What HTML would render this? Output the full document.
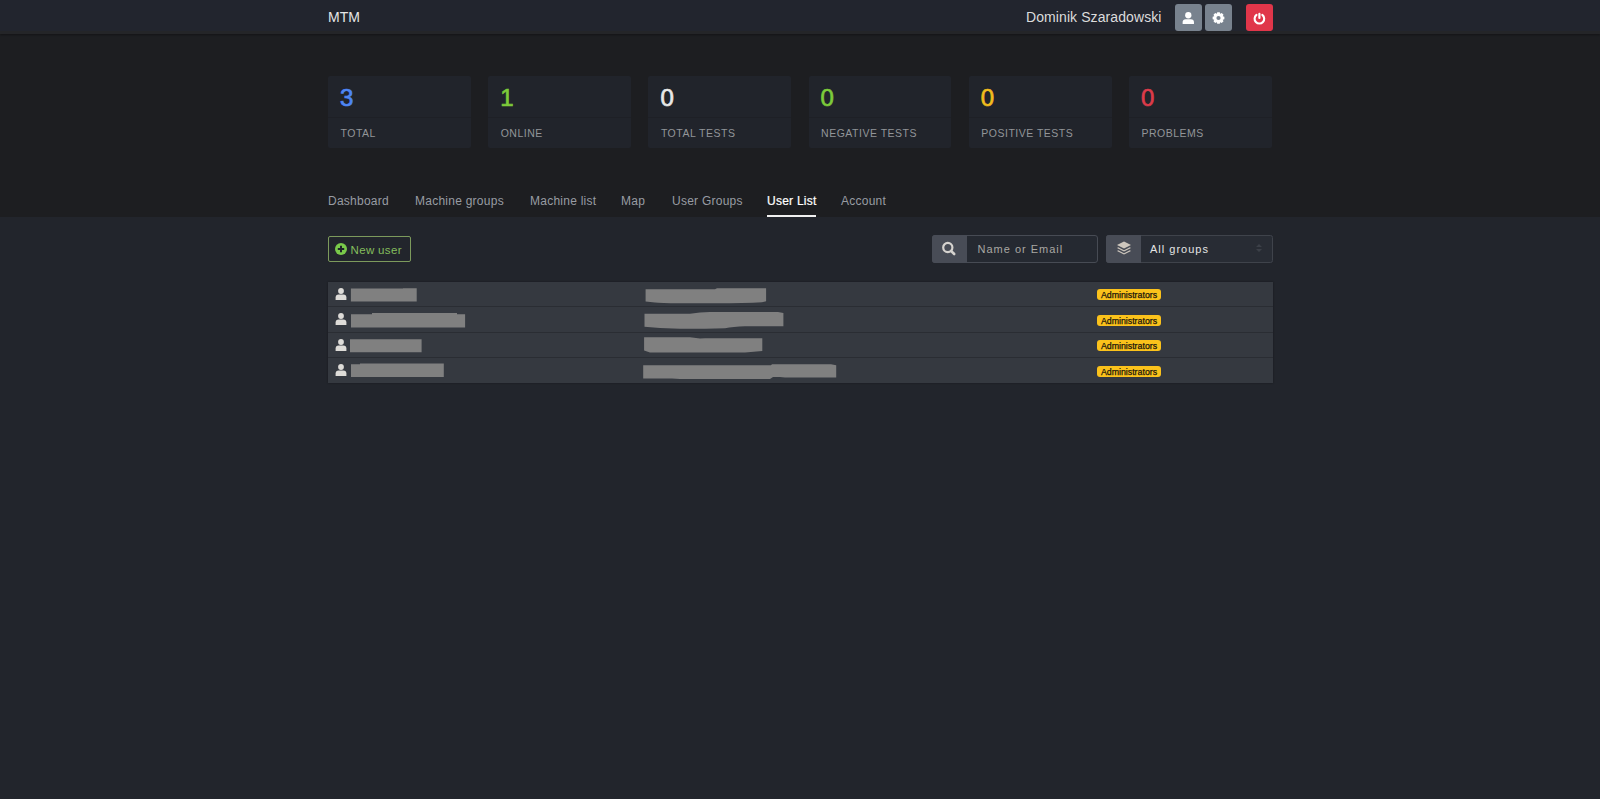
<!DOCTYPE html>
<html><head><meta charset="utf-8">
<style>
html,body{margin:0;padding:0;}
body{width:1600px;height:799px;overflow:hidden;position:relative;background:#22252c;font-family:"Liberation Sans",sans-serif;}
.abs{position:absolute;}
#hdr{left:0;top:0;width:1600px;height:31px;background:#22252e;border-bottom:3px solid #242528;box-shadow:0 1px 2px rgba(0,0,0,.35);z-index:3;}
#top{left:0;top:34px;width:1600px;height:183px;background:#1d1e21;z-index:1;}
.t{position:absolute;white-space:nowrap;line-height:1;}
.hbtn{position:absolute;top:4px;width:26.5px;height:27px;border-radius:3px;background:#78828e;}
.card{position:absolute;top:76.2px;width:142.8px;height:71.6px;background:#21242b;border-radius:2px;z-index:2;}
.card .hd{position:absolute;left:0;top:0;right:0;height:41.3px;border-bottom:1px solid #1e2026;}
.num{position:absolute;left:12px;top:10px;font-size:24px;line-height:1;-webkit-text-stroke:0.7px currentColor;}
.lbl{position:absolute;z-index:4;left:12px;top:127.8px;font-size:10.5px;letter-spacing:0.5px;color:#929599;}
.nav{position:absolute;top:195.2px;font-size:12px;letter-spacing:0.25px;color:#989ca3;white-space:nowrap;line-height:1;z-index:2;}
.red{background:#808080;}
.badge{position:absolute;left:1097px;width:64px;height:11.3px;background:#fbc21b;border-radius:3px;color:#1a160c;font-size:8.8px;line-height:12.3px;-webkit-text-stroke:0.25px #1a160c;text-align:center;white-space:nowrap;}
</style></head>
<body>
<div id="hdr" class="abs">
  <div class="t" style="left:328px;top:10px;font-size:14px;color:#e6e6e6;">MTM</div>
  <div class="t" style="left:1026px;top:10px;font-size:14px;letter-spacing:0.09px;color:#dcdcdc;">Dominik Szaradowski</div>
  <div class="hbtn" style="left:1175px;"></div>
  <div class="hbtn" style="left:1205px;width:27px;"></div>
  <div class="hbtn" style="left:1246px;width:27px;background:#e0364a;"></div>
  <svg class="abs" style="left:1182.2px;top:11.6px;" width="12.6" height="12.6" viewBox="0 0 12 12"><circle cx="6" cy="3.1" r="3" fill="#fff"/><path d="M0.6 12V9.6Q0.6 6.8 3.6 6.8H8.4Q11.4 6.8 11.4 9.6V12Q11.4 12.3 11.1 12.3H0.9Q0.6 12.3 0.6 12Z" fill="#fff"/></svg>
  <svg class="abs" style="left:1205px;top:5px;" width="27" height="26" viewBox="0 0 27 26"><g transform="translate(13.5 13)"><path d="M4.27 -1.72 L5.87 -1.25 L5.87 1.25 L4.27 1.72 L4.23 1.80 L5.03 3.27 L3.27 5.03 L1.80 4.23 L1.72 4.27 L1.25 5.87 L-1.25 5.87 L-1.72 4.27 L-1.80 4.23 L-3.27 5.03 L-5.03 3.27 L-4.23 1.80 L-4.27 1.72 L-5.87 1.25 L-5.87 -1.25 L-4.27 -1.72 L-4.23 -1.80 L-5.03 -3.27 L-3.27 -5.03 L-1.80 -4.23 L-1.72 -4.27 L-1.25 -5.87 L1.25 -5.87 L1.72 -4.27 L1.80 -4.23 L3.27 -5.03 L5.03 -3.27 L4.23 -1.80Z" fill="#fff"/><circle cx="0" cy="0" r="2.1" fill="#78828e"/></g></svg>
  <svg class="abs" style="left:1246px;top:4.5px;" width="27" height="26" viewBox="0 0 27 26"><path d="M10.5 9.9A4.8 4.8 0 1 0 16.3 9.9" fill="none" stroke="#fff" stroke-width="2.1" stroke-linecap="round"/><path d="M13.4 8.9V13" stroke="#fff" stroke-width="2.2" stroke-linecap="round"/></svg>
</div>
<div id="top" class="abs"></div>

<div class="card" style="left:328px;"><div class="hd"></div><div class="num" style="color:#4e86f5">3</div></div>
<div class="card" style="left:488.2px;"><div class="hd"></div><div class="num" style="color:#7dcb3a">1</div></div>
<div class="card" style="left:648.4px;"><div class="hd"></div><div class="num" style="color:#e8e8e8">0</div></div>
<div class="card" style="left:808.6px;"><div class="hd"></div><div class="num" style="color:#7dcb3a">0</div></div>
<div class="card" style="left:968.8px;"><div class="hd"></div><div class="num" style="color:#f2bd1d">0</div></div>
<div class="card" style="left:1129px;"><div class="hd"></div><div class="num" style="color:#dd3b4a">0</div></div>

<div class="nav" style="left:328px;">Dashboard</div>
<div class="nav" style="left:415px;">Machine groups</div>
<div class="nav" style="left:530px;">Machine list</div>
<div class="nav" style="left:621px;">Map</div>
<div class="nav" style="left:672px;">User Groups</div>
<div class="nav" style="left:767px;color:#fff;-webkit-text-stroke:0.2px #fff;">User List</div>
<div class="nav" style="left:841px;">Account</div>
<div class="abs" style="left:767px;top:215px;width:49px;height:2px;background:#f0f0f0;z-index:2;"></div>


<div class="lbl t" style="left:340.5px;">TOTAL</div>
<div class="lbl t" style="left:500.7px;">ONLINE</div>
<div class="lbl t" style="left:660.9px;">TOTAL TESTS</div>
<div class="lbl t" style="left:821.1px;">NEGATIVE TESTS</div>
<div class="lbl t" style="left:981.3px;">POSITIVE TESTS</div>
<div class="lbl t" style="left:1141.5px;">PROBLEMS</div>

<!-- New user button -->
<div class="abs" style="left:328px;top:235.5px;width:80.5px;height:24.5px;border:1px solid #7c9a5c;border-radius:2px;"></div>
<svg class="abs" style="left:334.8px;top:243px;" width="12" height="12" viewBox="0 0 12 12"><circle cx="6" cy="6" r="6" fill="#79c94a"/><path d="M6 2.8V9.2M2.8 6H9.2" stroke="#1f2329" stroke-width="2"/></svg>
<div class="t" style="left:350.5px;top:245px;font-size:11.5px;letter-spacing:0.35px;color:#84bd5c;">New user</div>

<!-- search -->
<div class="abs" style="left:932px;top:235px;width:164px;height:26px;border:1px solid #474b54;border-radius:3px;background:#252931;"></div>
<div class="abs" style="left:932px;top:235px;width:35px;height:28px;background:#484c56;border-radius:3px 0 0 3px;"></div>
<svg class="abs" style="left:940px;top:240px;" width="18" height="18" viewBox="0 0 18 18"><circle cx="7.8" cy="7.5" r="4.6" fill="none" stroke="#d6d3cf" stroke-width="2.2"/><path d="M11 10.8L14.2 14" stroke="#d6d3cf" stroke-width="2.6" stroke-linecap="round"/></svg>
<div class="t" style="left:977.5px;top:244px;font-size:11px;letter-spacing:1px;color:#a9a7a3;">Name or Email</div>

<!-- select -->
<div class="abs" style="left:1106px;top:235px;width:165px;height:26px;border:1px solid #3f434b;border-radius:2.5px;background:#282c34;"></div>
<div class="abs" style="left:1106px;top:235px;width:35px;height:28px;background:#484c56;border-radius:3px 0 0 3px;"></div>
<svg class="abs" style="left:1115px;top:239px;" width="18" height="18" viewBox="0 0 18 18"><path d="M9 2.5L16 6L9 9.5L2 6Z" fill="#cdc6bd"/><path d="M3.2 8.3L9 11.2L14.8 8.3L16 9L9 12.5L2 9Z" fill="#cdc6bd"/><path d="M3.2 11.3L9 14.2L14.8 11.3L16 12L9 15.5L2 12Z" fill="#cdc6bd"/></svg>
<div class="t" style="left:1150px;top:244px;font-size:11px;letter-spacing:1px;color:#e4e4e4;">All groups</div>
<svg class="abs" style="left:1255px;top:243px;" width="8" height="10" viewBox="0 0 8 10"><path d="M4 1L7 4H1Z M4 9L7 6H1Z" fill="#3c4048"/></svg>
<div class="abs" style="left:328px;top:281.5px;width:945px;height:101.5px;background:#353940;box-shadow:0 0 2px rgba(0,0,0,.35);"></div>
<svg class="abs" style="left:334.8px;top:287.5px;" width="12" height="12" viewBox="0 0 12 12"><circle cx="6" cy="3" r="2.9" fill="#dedcd8"/><path d="M0.6 12V9.6Q0.6 6.6 3.6 6.6H8.4Q11.4 6.6 11.4 9.6V12Q11.4 12.3 11.1 12.3H0.9Q0.6 12.3 0.6 12Z" fill="#dedcd8"/></svg>
<svg class="abs" style="left:0;top:0;" width="1600" height="799" viewBox="0 0 1600 799"><path d="M350.9 288.5H403V288.2H416.7V301.5H350.9Z" fill="#808080"/><path d="M351 314.2H372V313.1H457V314.2H465.1V327.5H351Z" fill="#808080"/><path d="M350 339.2H421.6V352.2H350Z" fill="#808080"/><path d="M351 364.25H360V363.6H443.8V377H351Z" fill="#808080"/><path d="M645.6 289.2H715L717 288.2H766.1V301.3L762 302.2Q745 303.2 715 303.2H680Q660 303 655 302.4L645.6 301.6Z" fill="#808080"/><path d="M644.5 313.8H690Q700 312 710 311.9H778L783.4 313V326.2H745Q733 326.5 725 328.3L705 328.8H680L660 328L644.5 326.7Z" fill="#808080"/><path d="M644.1 337.3H690L700 338.6L705 338.2H762.3V351L745 352.6H660L650 352.4L644.1 350.4Z" fill="#808080"/><path d="M643.2 365.2H771L772 364.2H831L836.2 365.2V377.5H785L780 377H773L770 378.9H680L672 378.6H643.2Z" fill="#808080"/></svg>
<div class="badge" style="top:289px;">Administrators</div>
<div class="abs" style="left:328px;top:306px;width:945px;height:1px;background:#2a2d33;"></div>
<svg class="abs" style="left:334.8px;top:313.2px;" width="12" height="12" viewBox="0 0 12 12"><circle cx="6" cy="3" r="2.9" fill="#dedcd8"/><path d="M0.6 12V9.6Q0.6 6.6 3.6 6.6H8.4Q11.4 6.6 11.4 9.6V12Q11.4 12.3 11.1 12.3H0.9Q0.6 12.3 0.6 12Z" fill="#dedcd8"/></svg>
<div class="badge" style="top:314.7px;">Administrators</div>
<div class="abs" style="left:328px;top:332px;width:945px;height:1px;background:#2a2d33;"></div>
<svg class="abs" style="left:334.8px;top:338.7px;" width="12" height="12" viewBox="0 0 12 12"><circle cx="6" cy="3" r="2.9" fill="#dedcd8"/><path d="M0.6 12V9.6Q0.6 6.6 3.6 6.6H8.4Q11.4 6.6 11.4 9.6V12Q11.4 12.3 11.1 12.3H0.9Q0.6 12.3 0.6 12Z" fill="#dedcd8"/></svg>
<div class="badge" style="top:340.2px;">Administrators</div>
<div class="abs" style="left:328px;top:357.3px;width:945px;height:1px;background:#2a2d33;"></div>
<svg class="abs" style="left:334.8px;top:364.2px;" width="12" height="12" viewBox="0 0 12 12"><circle cx="6" cy="3" r="2.9" fill="#dedcd8"/><path d="M0.6 12V9.6Q0.6 6.6 3.6 6.6H8.4Q11.4 6.6 11.4 9.6V12Q11.4 12.3 11.1 12.3H0.9Q0.6 12.3 0.6 12Z" fill="#dedcd8"/></svg>
<div class="badge" style="top:365.7px;">Administrators</div>
</body></html>
